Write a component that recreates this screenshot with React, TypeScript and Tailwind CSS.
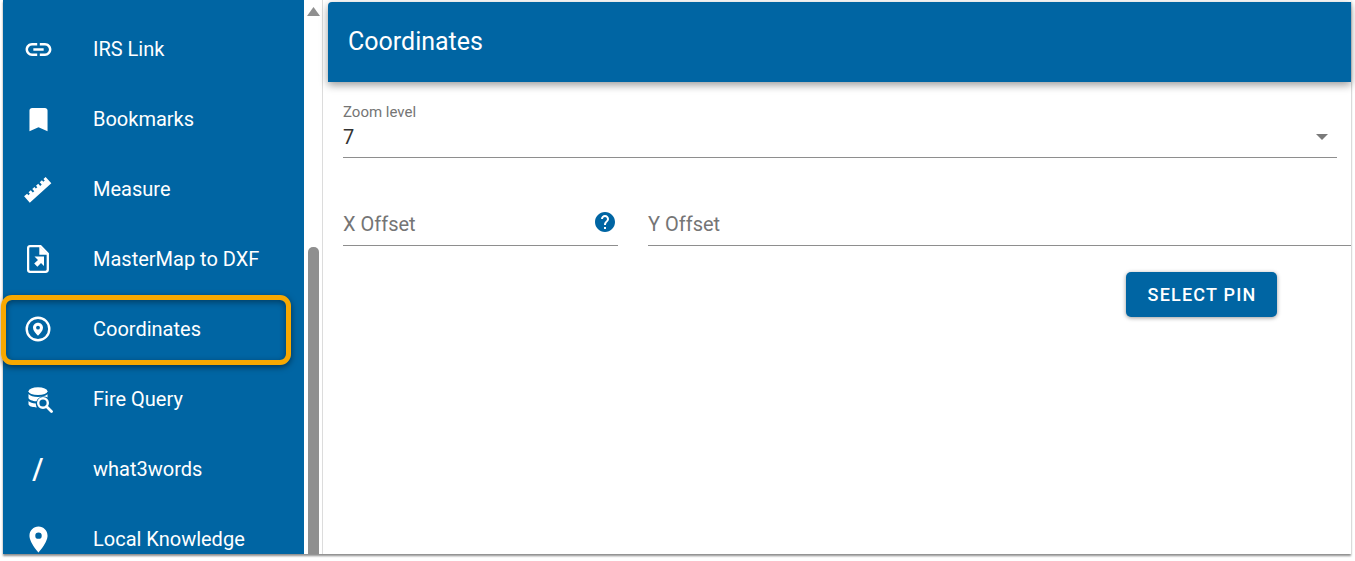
import React from "react";
import { MdLink, MdBookmark, MdPlace, MdHelp } from "react-icons/md";

const Ruler = () => (
  <svg width="32" height="32" viewBox="0 0 32 32" className="ml-[1px]">
    <g transform="rotate(-42 16 16)">
      <path
        d="M0 11.500h4v2h2v-2h3v3h2v-3h3v2h2v-2h3v3h2v-3h3v2h2v-2h3v8.500H0z"
        fill="#fff"
      />
    </g>
  </svg>
);

const FileArrow = () => (
  <svg width="22" height="28" viewBox="0 0 22 28" fill="none">
    <path d="M3 1.200h10.500l7.300 7.500v15.800c0 1.300-1 2.300-2.300 2.300H3c-1.200 0-1.900-1-1.900-2.300V3.500c0-1.300.7-2.300 1.900-2.300z" stroke="#fff" strokeWidth="2.300" />
    <path d="M12.300 1.200v8.500h8.500z" fill="#fff" />
    <path d="M7.500 11.500h9.500v9.500l-3-3-3.600 3.800-3.200-3.200 3.800-3.700z" fill="#fff" />
  </svg>
);

const PinCircle = () => (
  <svg width="26" height="26" viewBox="0 0 26 26" fill="none">
    <circle cx="13" cy="13" r="11.300" stroke="#fff" strokeWidth="2.400" />
    <path d="M13 6.800c-2.900 0-5 2.200-5 4.900 0 3 2.900 5.700 5 8 2.100-2.300 5-5 5-8 0-2.700-2.100-4.900-5-4.900z" fill="#fff" />
    <circle cx="13" cy="11.700" r="1.900" fill="#0065a3" />
  </svg>
);

const DbSearch = () => (
  <svg width="26" height="26" viewBox="0 0 26 26" fill="none" className="ml-[6px] mt-[2px]">
    <ellipse cx="10" cy="4.200" rx="9.500" ry="3.900" fill="#fff" />
    <path d="M.5 7c1.500 2 5.300 3 9.500 3 3.800 0 7.500-.8 9.500-2.700v3.300c-1-.6-2.500-1-4-1-3.200 0-6 1.900-7 4.700C4.200 14 1 12.800.5 11z" fill="#fff" />
    <path d="M.5 14c1.500 1.500 4 2.300 7.300 2.600 0 1.500.3 2.800 1 4-4.800-.2-8.300-1.500-8.300-3.500z" fill="#fff" />
    <circle cx="15" cy="16" r="4.800" stroke="#fff" strokeWidth="2.400" />
    <path d="M18.500 19.500l5 5" stroke="#fff" strokeWidth="2.800" strokeLinecap="round" />
  </svg>
);

const items = [
  { label: "IRS Link", icon: <MdLink size={31} color="#fff" /> },
  { label: "Bookmarks", icon: <MdBookmark size={31} color="#fff" /> },
  { label: "Measure", icon: <Ruler /> },
  { label: "MasterMap to DXF", icon: <FileArrow /> },
  { label: "Coordinates", icon: <PinCircle /> },
  { label: "Fire Query", icon: <DbSearch /> },
  { label: "what3words", icon: <span className="text-[29px] font-medium leading-none text-white">/</span> },
  { label: "Local Knowledge", icon: <MdPlace size={31} color="#fff" /> },
];

export default function App() {
  return (
    <div className="relative h-[561px] w-[1355px] overflow-hidden bg-white font-['Roboto',sans-serif]">
      <div className="ml-[3px] flex h-[554px] w-[1348px] shadow-[0_2px_2px_rgba(0,0,0,0.45)]">
        <nav className="flex w-[301px] shrink-0 flex-col overflow-hidden bg-[#0065a3] pt-[14px]">
          {items.map((item) => (
            <div key={item.label} className="flex h-[70px] shrink-0 items-center text-white">
              <div className="flex w-[70px] shrink-0 items-center justify-center">{item.icon}</div>
              <span className="ml-[20px] text-[20px] leading-none">{item.label}</span>
            </div>
          ))}
        </nav>
        <div className="flex w-[19px] shrink-0 flex-col items-center border-r border-[#dcdcdc] bg-white">
          <svg width="13" height="9" viewBox="0 0 13 9" className="mt-[7px] ml-[1px]">
            <path d="M6.500 0L13 9H0z" fill="#8f8f8f" />
          </svg>
          <div className="mt-[231px] ml-[1px] w-[11px] flex-1 rounded-t-[5px] bg-[#8f8f8f]" />
        </div>
        <main className="min-w-0 flex-1 bg-white">
          <header className="ml-[5px] mt-[2px] flex h-[80px] items-center rounded-tl-[4px] bg-[#0065a3] pl-[20px] shadow-[0_3px_8px_rgba(0,0,0,0.4)]">
            <h1 className="text-[25px] font-normal text-white">Coordinates</h1>
          </header>
          <div className="ml-[20px] mt-[21px] flex h-[55px] w-[994px] flex-col border-b border-[#8e8e8e]">
            <label className="text-[15px] leading-[18px] text-[#757575]">Zoom level</label>
            <div className="mt-[3px] flex items-center justify-between pr-[9px]">
              <span className="text-[20px] leading-[26px] text-[#333]">7</span>
              <svg width="12" height="6" viewBox="0 0 12 6"><path d="M0 0h12L6 6z" fill="#7a7a7a" /></svg>
            </div>
          </div>
          <div className="ml-[20px] mt-[45px] flex gap-[30px]">
            <div className="relative flex h-[43px] w-[275px] items-center border-b border-[#8e8e8e] text-[20px] text-[#757575]">
              X Offset
              <MdHelp size={24} color="#0065a3" className="absolute right-[1px] top-[7px]" />
            </div>
            <div className="flex h-[43px] flex-1 items-center border-b border-[#8e8e8e] text-[20px] text-[#757575]">Y Offset</div>
          </div>
          <div className="ml-[803px] mt-[26px]">
            <button className="h-[45px] w-[151px] rounded-[5px] bg-[#0065a3] pl-[1px] text-[18px] font-medium tracking-[1.200px] text-white shadow-[0_1px_4px_rgba(0,0,0,0.4)]">SELECT PIN</button>
          </div>
        </main>
      </div>
      <div className="absolute left-[1px] top-[295px] h-[70px] w-[290px] rounded-[11px] border-[5px] border-[#f8a800] shadow-[0_2px_6px_rgba(0,0,0,0.5),inset_0_2px_6px_rgba(0,0,0,0.4)]" />
    </div>
  );
}
